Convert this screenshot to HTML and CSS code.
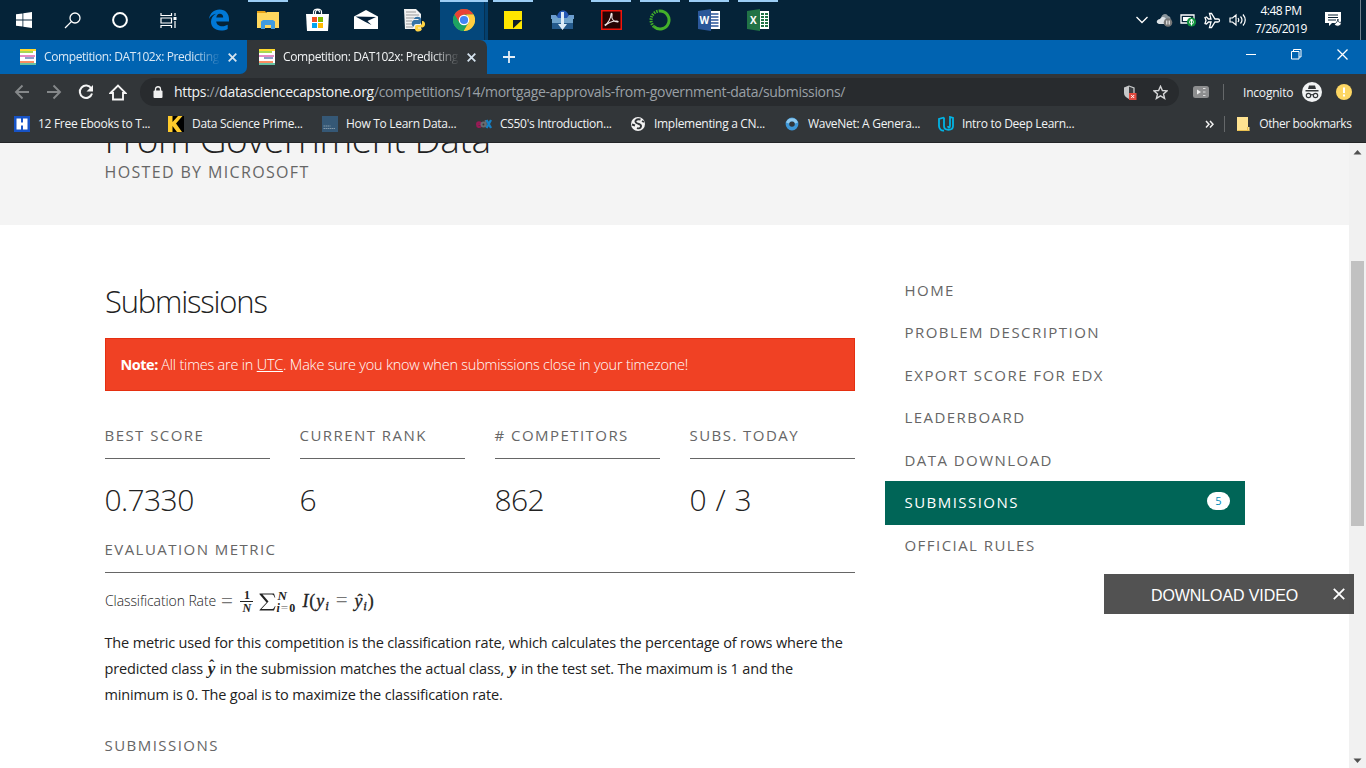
FILE: index.html
```html
<!DOCTYPE html>
<html lang="en">
<head>
<meta charset="utf-8">
<title>Competition: DAT102x: Predicting Mortgage Approvals</title>
<link rel="stylesheet" href="styles.css">
</head>
<body>
<header class="taskbar">
  <div class="sys"><svg width="16" height="16" viewBox="0 0 16 16" fill="#fff"><path d="M0 2.3 6.5 1.4V7.6H0zM7.3 1.3 16 0V7.6H7.3zM0 8.4H6.5V14.6L0 13.7zM7.3 8.4H16V16L7.3 14.7z"/></svg></div>
  <div class="sys"><svg width="17" height="17" viewBox="0 0 17 17" fill="none" stroke="#fff" stroke-width="1.3"><circle cx="11" cy="6" r="5"/><path d="M7.4 9.6 1 16"/></svg></div>
  <div class="sys"><svg width="16" height="16" viewBox="0 0 16 16" fill="none" stroke="#fff" stroke-width="2"><circle cx="8" cy="8" r="6.9"/></svg></div>
  <div class="sys"><svg width="17" height="17" viewBox="0 0 17 17" fill="none" stroke="#fff" stroke-width="1.2"><path d="M1 1v2.5h10.500V1M1 16v-2.500h10.500V16M1 6h10.500v5H1zM15 1v3M15 9v7"/><path d="M13.500 5h3v3h-3z" fill="#fff" stroke="none"/></svg></div>
  <div class="app"><svg width="22" height="22" viewBox="0 0 22 22"><path fill="#0078d7" d="M1 10C2 4 6 .5 11.500.5c6 0 9.500 4.200 9.500 9.500v2.500H8.200c.3 3.200 3 4.700 6 4.700 2 0 4-.6 5.500-1.500v4.200c-1.800 1-4.200 1.600-6.700 1.600C7 21.500 3 17.800 3 12.800c0-3.600 2-6.500 5-8C4.500 5.500 2.200 7.500 1 10zm7.300-1.500h6.900c0-2.400-1.300-3.700-3.400-3.700-1.900 0-3.200 1.500-3.500 3.700z"/></svg></div>
  <div class="app run"><svg width="22" height="20" viewBox="0 0 22 20"><path d="M0 1h8l1.500 2H0z" fill="#e8a317"/><path d="M0 3h9l1-1h12v16H0z" fill="#ffd75e"/><path d="M4 19v-7.500L6 10h10l2 1.500V19h-4v-4H8v4z" fill="#3f9be0"/></svg></div>
  <div class="app"><svg width="23" height="24" viewBox="0 0 23 24"><path d="M7.500 6V4c0-4 8-4 8 0v2M9.500 6V4.500c0-3.500 4-3.500 4 0" fill="none" stroke="#fff" stroke-width="1.200"/><path d="M0 6h23l-1 17H1z" fill="#fff"/><path fill="#f25022" d="M6 9h5v5H6z"/><path fill="#7fba00" d="M12 9h5v5h-5z"/><path fill="#00a4ef" d="M6 15h5v5H6z"/><path fill="#ffb900" d="M12 15h5v5h-5z"/></svg></div>
  <div class="app"><svg width="24" height="20" viewBox="0 0 24 20"><path d="M0 6.500 12 0l12 6.500V19H0z" fill="#fff"/><path d="M1.500 6.500 22 7l-8.500 4 4 4-6.500-3.300z" fill="#03203a"/></svg></div>
  <div class="app"><svg width="24" height="24" viewBox="0 0 24 24"><path d="M1 1h12l5 5v15H2z" fill="#f2f2f2"/><path d="M3 4h10M3 7h13M3 10h8M3 13h6M3 16h6M3 19h7" stroke="#999"/><path d="M11 11c0-3 7-3 7 0v3c0 1.500-1 2-2 2h-3c-1.500 0-2 1-2 2.500-3 .5-3-6 0-6.500h4.500v-1z" fill="#3573a6"/><path d="M19 13c4-.5 4 6 .5 6.500H15v1h4c0 4-7 4-7 .5 0-3 0-4 2-4h3c1.500 0 2-1 2-2z" fill="#ffd343"/></svg></div>
  <div class="app run current"><svg width="22" height="22" viewBox="0 0 22 22"><circle cx="11" cy="11" r="11" fill="#4caf50"/><path d="M11 0a11 11 0 0 1 9.600 5.600H11l-4.700 8L1.500 5.500A11 11 0 0 1 11 0z" fill="#ea4335"/><path d="M20.600 5.600A11 11 0 0 1 10.500 22l5.200-8.600L13.500 5.600z" fill="#ffcd40"/><path d="M1.500 5.500 6.500 14l4.500 2 2.500.5-3 5.500A11 11 0 0 1 1.500 5.500z" fill="#1da362"/><circle cx="11" cy="11" r="5.300" fill="#fff"/><circle cx="11" cy="11" r="4.100" fill="#4285f4"/></svg></div>
  <div class="app run"><svg width="18" height="18" viewBox="0 0 18 18"><path fill="#ffe600" d="M0 0h18v18H0z"/><path fill="#12202a" d="M9 17.500V9h9z"/></svg></div>
  <div class="app"><svg width="23" height="20" viewBox="0 0 23 20"><path d="M6 8c0-10 12-10 12 0z" fill="#2458b5"/><path d="M0 5h5l2 3h9l2-3h5v4H0z" fill="#6c9dcf"/><path d="M1 8h21v11H1z" fill="#245a8c"/><path d="M1 8h21v5H1z" fill="#6fa3cc"/><path d="M10 2h3v12h3l-4.500 6L7 14h3z" fill="#ddecf7"/></svg></div>
  <div class="app run"><svg width="21" height="20" viewBox="0 0 21 20"><path d="M.75.75h19.500v18.500H.75z" fill="#250404" stroke="#f1150c" stroke-width="1.500"/><path d="M4 15c3-1.500 6-7 6-10.500 0-2 1.500-1 1 .5C10 9 13 12 16.500 12c1 0 1-1-1-1-4 0-9 2-11 4.500z" fill="none" stroke="#f1e8e8" stroke-width="1.100"/></svg></div>
  <div class="app run"><svg width="22" height="22" viewBox="0 0 22 22" fill="none" stroke="#43b02a"><path d="M11 2a9 9 0 1 1-6 15.700" stroke-width="3"/><path d="M5 17.700A9 9 0 0 1 11 2" stroke-width="3" stroke-dasharray="1.500 1"/></svg></div>
  <div class="app run"><svg width="23" height="22" viewBox="0 0 23 22"><path d="M12 2h10v18H12z" fill="#fff"/><path d="M13 5h7.500M13 8h7.500M13 11h7.500M13 14h7.500M13 17h7.500" stroke="#2b579a" stroke-width="1.300"/><path d="M0 2 13 0v22L0 20z" fill="#2b579a"/><text x="1.500" y="15" class="letter">W</text></svg></div>
  <div class="app run"><svg width="23" height="22" viewBox="0 0 23 22"><path d="M12 2h10v18H12z" fill="#fff"/><path d="M14 5h7M14 8h7M14 11h7M14 14h7M14 17h7" stroke="#217346" stroke-width="1.800"/><path d="M17.500 3v16" stroke="#fff"/><path d="M0 2 13 0v22L0 20z" fill="#217346"/><text x="3" y="15" class="letter">X</text></svg></div>
  <div class="tray">
    <svg width="14" height="10" viewBox="0 0 14 10" fill="none" stroke="#fff" stroke-width="1.300"><path d="M1.500 2 7 7.500 12.500 2"/></svg>
    <svg width="17" height="14" viewBox="0 0 17 14"><path d="M5 5C6 0 11 0 12 3c3 0 3 4 2 5H6z" fill="#8a959c"/><path d="M3 11c-4-1-2-5 1-5 2-3 5-2 6 0l5 4v1z" fill="#dce2e6"/><circle cx="12" cy="9.500" r="4.300" fill="#777"/><path d="M10.800 7.500v4M13.200 7.500v4" stroke="#fff"/></svg>
    <svg width="17" height="14" viewBox="0 0 17 14"><path d="M1 2h13v8H1z" fill="none" stroke="#fff" stroke-width="1.300"/><path d="M3 4h8v4H3z" fill="#fff"/><circle cx="11.500" cy="9" r="4.600" fill="#10933e"/><path d="M11.500 6c3 3 2 5 0 5s-3-2 0-5v6.500" fill="none" stroke="#fff"/></svg>
    <svg width="17" height="17" viewBox="0 0 17 17" fill="none" stroke="#fff" stroke-width="1.300"><path d="M1 5.500 2.500 5l2 2H7L5.500 1.500H7.500L11 7h3c2 0 2 3 0 3h-3l-3.500 5.500h-2L7 10H4.500l-2 2L1 11.500l1-3z"/></svg>
    <svg width="18" height="14" viewBox="0 0 18 14" fill="none" stroke="#fff" stroke-width="1.200"><path d="M1 5h2.500L7 2v10L3.500 9H1zM9 5q1.500 2 0 4M11.500 3.500q3 3.500 0 7M14 1.500q4.500 5.500 0 11"/></svg>
  </div>
  <div class="clock"><span class="time">4:48 PM</span><span>7/26/2019</span></div>
  <div class="action"><svg width="17" height="17" viewBox="0 0 17 17"><path d="M0 0h16v11H7l-3 3v-3H0z" fill="#fff"/><path d="M3 3h10M3 5.500h10M3 8h8" stroke="#062033"/><path d="M13 7c-1 3-1 4-4 5 3 4 8 2 7-2-2 1-3 0-3-3z" fill="#fff" stroke="#062033" stroke-width=".8"/></svg></div>
</header>

<nav class="tabs">
  <div class="tab"><svg class="fav" width="16" height="16" viewBox="0 0 16 16"><path fill="#fff" d="M0 0h16v16H0z"/><path fill="#ffd92f" d="M0 0h16v2H0z"/><path fill="#a6d854" d="M0 2h13v2H0z"/><path fill="#e78ac3" d="M0 6h15v2H0z"/><path fill="#8da0cb" d="M5 8h9v2H5z"/><path fill="#fc8d62" d="M0 12h14v2H0z"/><path fill="#66c2a5" d="M0 14h16v2H0z"/></svg><span class="title">Competition: DAT102x: Predicting</span><svg class="x" width="9" height="9" viewBox="0 0 9 9"><path d="M.7.7 8.300 8.300M8.300.7.7 8.300"/></svg></div>
  <div class="tab active"><svg class="fav" width="16" height="16" viewBox="0 0 16 16"><path fill="#fff" d="M0 0h16v16H0z"/><path fill="#ffd92f" d="M0 0h16v2H0z"/><path fill="#a6d854" d="M0 2h13v2H0z"/><path fill="#e78ac3" d="M0 6h15v2H0z"/><path fill="#8da0cb" d="M5 8h9v2H5z"/><path fill="#fc8d62" d="M0 12h14v2H0z"/><path fill="#66c2a5" d="M0 14h16v2H0z"/></svg><span class="title">Competition: DAT102x: Predicting</span><svg class="x" width="9" height="9" viewBox="0 0 9 9"><path d="M.7.7 8.300 8.300M8.300.7.7 8.300"/></svg></div>
  <svg class="plus" width="12" height="12" viewBox="0 0 12 12"><path d="M6 0v12M0 6h12"/></svg>
  <div class="wins">
    <svg width="10" height="11" viewBox="0 0 10 11"><path d="M0 5.500h10"/></svg>
    <svg width="11" height="11" viewBox="0 0 11 11"><path d="M.5 2.500h7.500v7.500H.5zM2.500 2.500v-2h7.500v7.500H8"/></svg>
    <svg width="11" height="11" viewBox="0 0 11 11"><path d="M.5.5l10 10M10.500.5l-10 10" stroke-width="1.300"/></svg>
  </div>
</nav>

<div class="toolbar">
  <div class="navs">
    <svg width="16" height="16" viewBox="0 0 16 16" fill="none" stroke="#85888a" stroke-width="1.900"><path d="M15 8H2M8.500 1.500 2 8l6.500 6.500"/></svg>
    <svg width="16" height="16" viewBox="0 0 16 16" fill="none" stroke="#85888a" stroke-width="1.900"><path d="M1 8h13M7.500 1.500 14 8l-6.500 6.500"/></svg>
    <svg width="16" height="16" viewBox="0 0 16 16"><path d="M13.300 4.500A6.200 6.200 0 1 0 14 9.500" fill="none" stroke="#f5f5f5" stroke-width="2"/><path d="M15 1v6.500H8.500z" fill="#f5f5f5"/></svg>
    <svg width="18" height="17" viewBox="0 0 18 17" fill="none" stroke="#f5f5f5" stroke-width="1.900"><path d="M1.500 9 9 1.500 16.500 9H14v6.500H4V9z"/></svg>
  </div>
  <div class="omni">
    <svg width="10" height="12" viewBox="0 0 10 12"><path d="M2.500 5V3c0-3 5-3 5 0v2" fill="none" stroke="#f0f0f0" stroke-width="1.300"/><rect x=".5" y="4.500" width="9" height="7.500" rx="1" fill="#f0f0f0"/></svg>
    <span class="url"><i>https</i>://<i>datasciencecapstone.org</i>/competitions/14/mortgage-approvals-from-government-data/submissions/</span>
    <svg width="14" height="15" viewBox="0 0 14 15"><path d="M6 .5 11 2.500V8c0 3-3 5-5 6-3-1.500-5-3-5-6V2.500z" fill="#3a3d40"/><path d="M6 .5v13.500C3 12.500 1 11 1 8V2.500z" fill="#c5c7c8"/><path d="M6 1 11 3V8" fill="none" stroke="#c5c7c8" stroke-width="1.300"/><path d="M6 8h7.500v7H6z" fill="#e04a3f"/><path d="m8.200 10 3 3M11.200 10l-3 3" stroke="#fff"/></svg>
    <svg width="15" height="15" viewBox="0 0 15 15" fill="none" stroke="#d5d6d7" stroke-width="1.400"><path d="m7.500 1.300 1.900 4.200 4.600.4-3.500 3 1.100 4.500-4.100-2.500-4.100 2.500 1.100-4.500-3.500-3 4.600-.4z"/></svg>
  </div>
  <svg class="ext" width="16" height="12" viewBox="0 0 16 12"><rect width="16" height="12" rx="2.500" fill="#8d8e8f"/><path d="M4 3.500 8 6 4 8.500z" fill="#eee"/><path d="M10 2.500h2.500M10 6h2.500M10 9.500h2.500" stroke="#ddd"/></svg>
  <span class="sep"></span>
  <span class="incog">Incognito</span>
  <svg class="spy" width="20" height="20" viewBox="0 0 20 20"><circle cx="10" cy="10" r="10" fill="#f1f3f4"/><path d="M7 3.500h6l1 3.500H6zM3.500 8h13v1.500h-13z" fill="#323639"/><g fill="none" stroke="#323639" stroke-width="1.200"><circle cx="6.500" cy="13.500" r="2.200"/><circle cx="13.500" cy="13.500" r="2.200"/><path d="M8.500 13q1.500-1 3 0"/></g></svg>
  <svg class="warn" width="16" height="16" viewBox="0 0 16 16"><circle cx="8" cy="8" r="8" fill="#fdd663"/><path d="M7 3.500h2V9H7zM7 10.500h2v2H7z" fill="#fff"/></svg>
</div>

<div class="bookmarks">
  <div class="bm"><svg width="16" height="16" viewBox="0 0 16 16"><path fill="#1753c6" d="M0 0h16v16H0z"/><path d="M2.500 2.500H7v4h2v-4h4.500v11H9v-4H7v4H2.500z" fill="#fff"/></svg><span>12 Free Ebooks to T...</span></div>
  <div class="bm"><svg width="16" height="16" viewBox="0 0 16 16"><path d="M0 0h16v16H0z"/><path d="M0 0h4.500v6L10 0h4.500L8 7.500l6 8.500H9L4.500 10v6H0z" fill="#ffcb2b"/></svg><span>Data Science Prime...</span></div>
  <div class="bm"><svg width="16" height="16" viewBox="0 0 16 16"><path fill="#355876" d="M0 0h16v16H0z"/><path d="M1.500 10h7M1.500 12.500h12" stroke="#8499a9" stroke-dasharray="1.500 .5"/></svg><span>How To Learn Data...</span></div>
  <div class="bm"><svg width="16" height="16" viewBox="0 0 16 16"><g fill="none" stroke-width="2"><path d="M1 8.500h4c0-3-4-3-4 0s2.500 3 4 2" stroke="#971b55"/><circle cx="7.500" cy="8.500" r="2" stroke="#696b70"/><path d="M9.700 4v7" stroke="#696b70"/><path d="m10.500 4 4.500 8M15 4l-4.500 8" stroke="#1580c6" stroke-width="2.300"/></g></svg><span>CS50's Introduction...</span></div>
  <div class="bm"><svg width="16" height="16" viewBox="0 0 16 16"><circle cx="8" cy="8" r="7" fill="#f2f2f2"/><path d="M10.500 3.500C6 2.500 4 5.500 6.500 7s5 1 4.500 3.500-3 2-4 1.500M2 8.500l3 1M12 5l2 1" fill="none" stroke="#303437" stroke-width="1.900"/></svg><span>Implementing a CN...</span></div>
  <div class="bm"><svg width="16" height="16" viewBox="0 0 16 16"><circle cx="8" cy="8" r="4.600" fill="none" stroke="#3d96d6" stroke-width="3.600"/><path d="M3.500 7A4.800 4.800 0 0 1 12.500 7" fill="none" stroke="#8ec8ed" stroke-width="3"/></svg><span>WaveNet: A Genera...</span></div>
  <div class="bm"><svg width="16" height="16" viewBox="0 0 16 16" fill="none" stroke="#02b3e4" stroke-width="1.800"><path d="M6 1.500v8.500c0 5 9 5 9 0V2l-3-1v9c0 2-2 2-2 0M6 1.500 1 3v7c0 3 2.500 5 5 4.500"/></svg><span>Intro to Deep Learn...</span></div>
  <div class="others"><svg class="more" width="9" height="9" viewBox="0 0 9 9" fill="none" stroke="#f0f0f0" stroke-width="1.500"><path d="M1 1l3 3.200L1 7.500M5 1l3 3.200L5 7.500"/></svg><span class="sep"></span><svg class="folder" width="13" height="14" viewBox="0 0 13 14"><path fill="#ffe391" d="M0 0h11v10h1.500v4H0z"/><path d="M.3 13.500h12M10.500 10v3" stroke="#e5b93f" stroke-width=".8"/></svg><span>Other bookmarks</span></div>
</div>

<div class="view">
  <main class="page">
    <section class="hero">
      <h1>From Government Data</h1>
      <p class="host caps">Hosted by Microsoft</p>
    </section>
    <div class="cols">
      <section class="content">
        <h2>Submissions</h2>
        <div class="note"><b>Note:</b> <span>All times are in <u>UTC</u>. Make sure you know when submissions close in your timezone!</span></div>
        <div class="stats">
          <div><h3 class="caps">Best score</h3><p>0.7330</p></div>
          <div><h3 class="caps">Current rank</h3><p>6</p></div>
          <div><h3 class="caps"># Competitors</h3><p>862</p></div>
          <div><h3 class="caps">Subs. today</h3><p>0 / 3</p></div>
        </div>
        <h3 class="caps eval">Evaluation metric</h3>
        <div class="formula"><span class="rate">Classification Rate</span><span class="eq">=</span><span class="frac"><span>1</span><em>N</em></span><svg class="sigma" width="17" height="18" viewBox="0 0 17 18"><path d="M.5.500H15l1.300 4h-.8C15 2 14 1.500 11.500 1.500H3.500l6 7-7 7.500H12c2.500 0 3-.8 3.800-2.800h.8L15 17.500H.5v-.6L7.500 9.500.5 1.200z" fill="#222"/></svg><span class="lims"><em>N</em><span><em>i</em><small>=</small>0</span></span><span class="body"><em>I</em>(<em>y<sub>i</sub></em><span class="eq2">=</span><em class="hat">y<sub>i</sub></em>)</span></div>
        <div class="text">
          <p>The metric used for this competition is the classification rate, which calculates the percentage of rows where the</p>
          <p>predicted class <em class="hat">y</em> in the submission matches the actual class, <em>y</em> in the test set. The maximum is 1 and the</p>
          <p>minimum is 0. The goal is to maximize the classification rate.</p>
        </div>
        <h3 class="caps last">Submissions</h3>
      </section>
      <nav class="side">
        <a class="caps">Home</a>
        <a class="caps">Problem description</a>
        <a class="caps">Export score for edX</a>
        <a class="caps">Leaderboard</a>
        <a class="caps">Data download</a>
        <a class="caps on">Submissions<span class="badge">5</span></a>
        <a class="caps">Official rules</a>
      </nav>
    </div>
  </main>
  <div class="scroll">
    <svg width="9" height="5" viewBox="0 0 9 5"><path d="M4.500 0 8.500 4.500h-8z"/></svg>
    <div class="thumb"></div>
    <svg class="down" width="9" height="5" viewBox="0 0 9 5"><path d="M4.500 5 .5.500h8z"/></svg>
  </div>
</div>
<div class="download"><span>DOWNLOAD VIDEO</span><svg width="12" height="12" viewBox="0 0 12 12"><path d="M.8.800l10.400 10.400M11.200.800.8 11.200" stroke="#fff" stroke-width="1.800"/></svg></div>
</body>
</html>
```
FILE: styles.css
```css
* { box-sizing: border-box; }
body { margin: 0; width: 1366px; height: 768px; overflow: hidden; display: flex; flex-direction: column; font-family: "Open Sans", "Noto Sans", sans-serif; color: #222; background: #fff; position: relative; }
svg { display: block; flex: none; }
h1, h2, h3, p { margin: 0; font-weight: 300; }

.taskbar { height: 40px; flex: none; display: flex; background: #052338; color: #fff; }
.sys { width: 48px; display: grid; place-items: center; }
.app { width: 49px; display: grid; place-items: center; padding-right: 1px; }
.sys + .app { margin-left: 3px; }
.run { background: linear-gradient(#9ccdf5, #9ccdf5) 4px 0 / 40px 2px no-repeat; }
.current { background: linear-gradient(#9ccdf5, #9ccdf5) 0 0 / 48px 2px no-repeat, linear-gradient(90deg, #04477b 44px, #052f50 44px 45px, #04406e 45px 48px, transparent 48px); }
.letter { font: bold 10px "Open Sans", sans-serif; fill: #fff; }
.tray { margin: 0 6.5px 0 auto; display: flex; align-items: center; gap: 7.25px; }
.clock { width: 56px; display: flex; flex-direction: column; align-items: center; font-size: 12px; line-height: 18px; padding-top: 2px; letter-spacing: -.55px; white-space: nowrap; }
.action { width: 54px; display: grid; place-items: center; margin-left: -3px; margin-right: -1px; }
.taskbar::after { content: ""; width: 5px; border-left: 1px solid #6d7f8c; margin-left: 1px; }

.tabs { height: 34px; flex: none; display: flex; background: #0063b1; color: #fff; }
.tab { width: 247px; display: flex; align-items: center; padding-left: 20px; font-size: 12px; color: #d9e8f5; border-radius: 0 0 7px 0; background: #0063b1; }
.tab:first-child { box-shadow: 8px 0 0 #323639; }
.tab.active { position: relative; width: 240px; padding-left: 12px; background: #323639; color: #f1f3f4; border-radius: 7px 7px 0 0; }
.fav { margin-right: 8px; }
.title { width: 175px; line-height: 20px; padding-bottom: 1px; overflow: hidden; white-space: nowrap; letter-spacing: -.4px; -webkit-mask: linear-gradient(90deg, #000 148px, transparent 177px); mask: linear-gradient(90deg, #000 148px, transparent 177px); }
.x { margin-left: 8.5px; stroke: #d5e3ee; stroke-width: 1.8; }
.plus { margin: 11px 0 0 16px; stroke: #e4eef7; stroke-width: 1.8; }
.wins { margin-left: auto; padding: 9px 18px 0 0; display: flex; gap: 35px; fill: none; stroke: #fff; }

.toolbar { height: 36px; flex: none; display: flex; align-items: center; background: #323639; color: #f1f3f4; font-size: 12px; }
.navs { display: flex; align-items: center; gap: 16px; padding-left: 14px; width: 140px; flex: none; }
.navs svg:last-child { margin-left: -1px; }
.omni { width: 1039px; height: 28px; border-radius: 14px; background: #282b2e; display: flex; align-items: center; padding: 0 11px 0 13px; }
.url { flex: 1; padding: 0 0 1px 11px; font-size: 14px; color: #9aa0a6; letter-spacing: -.32px; white-space: nowrap; }
.url i { font-style: normal; color: #f1f3f4; }
.omni svg:nth-of-type(2) { margin-right: 16px; }
.ext { margin-left: 14px; }
.sep { width: 1px; height: 16px; background: #65686a; margin-left: 14px; }
.incog { margin-left: 19px; width: 59px; letter-spacing: -.2px; }
.warn { margin-left: 14px; }

.bookmarks { height: 33px; flex: none; display: flex; align-items: center; background: #323639; color: #f1f3f4; font-size: 12px; letter-spacing: -.3px; border-bottom: 1px solid #232527; padding: 0 14px 4px; white-space: nowrap; }
.bm { display: flex; gap: 8px; align-items: center; flex: none; width: 154px; }
.bm span, .others > span { line-height: 16px; }
.others { display: flex; align-items: center; margin-left: auto; letter-spacing: -.42px; padding-right: .5px; }
.others .sep { margin-left: 10px; }
.folder { margin: 0 9px 0 12px; }

.view { flex: 1; min-height: 0; display: flex; }
.page { flex: 1; overflow: hidden; }
.hero { height: 82px; background: #f4f4f4; padding-left: 104.5px; overflow: hidden; }
h1 { font-size: 37px; line-height: 40px; margin-top: -24px; letter-spacing: -.37px; }
.caps { text-transform: uppercase; font-size: 15px; color: #666; letter-spacing: 1.45px; font-weight: 400; }
.host { line-height: 26px; font-size: 16px; letter-spacing: 1.35px; }
.cols { display: grid; grid-template-columns: 750px 360px; column-gap: 30px; padding-left: 105px; }
h2 { font-size: 31px; line-height: 40px; margin-top: 56px; letter-spacing: -1.2px; }
.note { height: 53px; margin-top: 17px; background: #f04124; border: 1px solid #e52f10; color: #fff; font-size: 14.5px; line-height: 51px; padding-left: 14.5px; letter-spacing: -.22px; font-weight: 300; }
.note b { font-weight: 700; letter-spacing: -.5px; }
.stats { display: grid; grid-template-columns: repeat(4, 165px); gap: 30px; margin-top: 34px; }
h3.caps { line-height: 20px; height: 34px; border-bottom: 1px solid #666; }
.content h3 { text-indent: -.5px; }
.stats p { font-size: 30px; line-height: 40px; margin-top: 21px; letter-spacing: -.6px; word-spacing: 2.2px; text-indent: -.5px; }
.eval { margin-top: 19px; }
.formula { height: 57px; display: flex; align-items: center; font-family: "Liberation Serif", serif; font-size: 18px; }
.rate { font: 300 14px "Open Sans", sans-serif; letter-spacing: -.1px; padding-bottom: 2px; }
.eq { margin: 0 7.5px 0 5px; color: #777; font-size: 21px; }
.frac { display: flex; flex-direction: column; align-items: center; font-size: 12px; font-weight: 700; line-height: 12px; width: 13px; }
.frac span { border-bottom: 1px solid #222; width: 13px; text-align: center; }
.sigma { margin-left: 6px; }
.lims { display: flex; flex-direction: column; font-size: 12px; line-height: 13px; font-weight: 700; width: 20px; white-space: nowrap; }
.lims small { font-size: 13px; font-weight: 400; color: #888; margin: 0 1px; line-height: 0; }
.lims > em { font-size: 13px; padding-left: 1px; }
.body { margin-left: 6px; white-space: nowrap; letter-spacing: .9px; -webkit-text-stroke: .3px #222; }
.body sub { font-size: 13px; line-height: 0; vertical-align: -3px; }
.eq2 { margin: 0 6px; color: #777; font-size: 21px; line-height: 18px; -webkit-text-stroke: 0; }
.hat { position: relative; }
.hat::before { content: "ˆ"; position: absolute; left: 3px; top: 1px; font-style: normal; font-size: 15px; line-height: 1; }
.text .hat::before { top: -1px; left: 2px; }
.text { font-size: 14.5px; line-height: 26px; white-space: nowrap; letter-spacing: -.155px; }
.text p { font-weight: 400; text-indent: -.5px; }
.text em { font: italic 700 17px/20px "Liberation Serif", serif; letter-spacing: 1px; margin-left: 1px; }
.last { margin-top: 27px; }
.side { padding-top: 43.5px; display: flex; flex-direction: column; }
.side a { height: 42.5px; line-height: 42px; padding: 0 15px 0 19.5px; display: flex; justify-content: space-between; align-items: center; }
.side .on { background: #006557; color: #fff; height: 44px; margin-bottom: -1.5px; padding-bottom: 2px; }
.side a:last-child { padding-top: 1px; }
.badge { width: 23px; height: 18px; border-radius: 9px; background: #fff; color: #008cba; font-size: 11px; line-height: 18px; text-align: center; letter-spacing: 0; margin-bottom: 2px; }
.scroll { width: 17px; background: #f1f1f1; display: flex; flex-direction: column; align-items: center; padding: 7px 0 5px; fill: #505050; }
.thumb { width: 13px; height: 265px; margin-top: 106px; background: #c1c1c1; }
.down { margin-top: auto; }
.download { position: absolute; left: 1104px; top: 574px; width: 250px; height: 40px; background: rgba(58, 58, 58, .88); color: #fff; display: flex; align-items: center; padding: 2px 9px 0 47px; justify-content: space-between; font: 16px "Liberation Sans", sans-serif; letter-spacing: -.1px; }
.download svg { margin-bottom: 2px; }
.download span { padding-top: 1px; }
```
